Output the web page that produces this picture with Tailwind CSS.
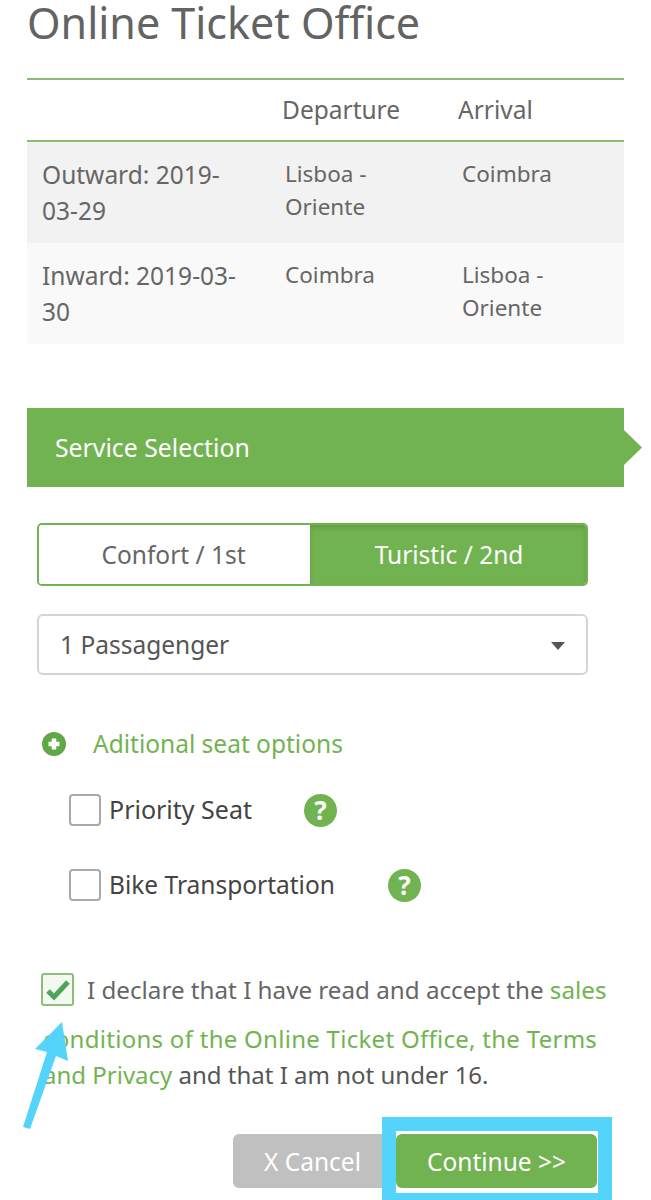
<!DOCTYPE html>
<html lang="en">
<head>
    <meta charset="UTF-8">
    <meta name="viewport" content="width=device-width, initial-scale=1.0">
    <title>Online Ticket Office</title>
    <script src="https://cdn.jsdelivr.net/npm/@tailwindcss/browser@4"></script>
</head>
<body class="bg-white overflow-hidden">
<div class="relative w-[651px] h-[1200px] overflow-hidden px-[27px] font-['Noto_Sans',sans-serif] text-[#666] text-[24.5px]">
    <!-- Title -->
    <h1 class="h-[78px] text-[43px] leading-[46px] text-[#636363] whitespace-nowrap">Online Ticket Office</h1>

    <!-- Journey table -->
    <div class="w-[597px]">
        <div class="grid grid-cols-[255px_176px_1fr] h-[64px] border-y-2 border-[#8fbb79] items-center">
            <div></div>
            <div>Departure</div>
            <div>Arrival</div>
        </div>
        <div class="grid grid-cols-[258px_177px_1fr] h-[101px] bg-[#f2f2f2] text-[22.5px] leading-[33px]">
            <div class="pl-[15px] pt-[15px] text-[24.5px] leading-[36px]">Outward: 2019-<br>03-29</div>
            <div class="pt-[15px]">Lisboa -<br>Oriente</div>
            <div class="pt-[15px]">Coimbra</div>
        </div>
        <div class="grid grid-cols-[258px_177px_1fr] h-[101px] bg-[#f9f9f9] text-[22.5px] leading-[33px]">
            <div class="pl-[15px] pt-[15px] text-[24.5px] leading-[36px]">Inward: 2019-03-<br>30</div>
            <div class="pt-[15px]">Coimbra</div>
            <div class="pt-[15px]">Lisboa -<br>Oriente</div>
        </div>
    </div>

    <!-- Section header -->
    <div class="relative w-[597px] h-[79px] mt-[64px] bg-[#72b351] text-white text-[24.8px] flex items-center pl-[28px]">
        Service Selection
        <div class="absolute left-full top-[22px] w-[18px] h-[35px] bg-[#72b351] [clip-path:polygon(0_0,100%_50%,0_100%)]"></div>
    </div>

    <!-- Class toggle -->
    <div class="flex w-[551px] h-[63px] mt-[36px] ml-[10px] rounded-[5px] border-2 border-[#72b351] overflow-hidden">
        <div class="w-[271px] flex items-center justify-center bg-white pt-[2px] pr-[2px]">Confort / 1st</div>
        <div class="flex-1 flex items-center justify-center bg-[#72b351] text-white pt-[2px] pl-[2px] shadow-[inset_0_3px_5px_rgba(0,0,0,0.125)]">Turistic / 2nd</div>
    </div>

    <!-- Passengers select -->
    <div class="flex items-center justify-between w-[551px] h-[61px] mt-[28px] ml-[10px] pl-[21px] pr-[21px] pt-[2px] rounded-[6px] border-2 border-[#d4d4d4] text-[#555]">
        <span>1 Passagenger</span>
        <span class="w-0 h-0 border-x-[7px] border-x-transparent border-t-[8px] border-t-[#555]"></span>
    </div>

    <!-- Seat options -->
    <div class="flex items-center h-[32px] mt-[53px] ml-[15px] text-[#72b351]">
        <svg class="w-[24px] h-[24px] mr-[27px]" viewBox="0 0 24 24">
            <circle cx="12" cy="12" r="12" fill="#5fa845"/>
            <path d="M12 6.5v11M6.5 12h11" stroke="#fff" stroke-width="4.5"/>
        </svg>
        <span>Aditional seat options</span>
    </div>

    <div class="flex items-center h-[34px] mt-[33px] ml-[42px] text-[#444]">
        <span class="w-[32px] h-[32px] mr-[8px] rounded-[4px] border-2 border-[#a9a9a9] bg-white"></span>
        <span class="text-[25px]">Priority Seat</span>
        <span class="flex items-center justify-center w-[33px] h-[33px] ml-[52px] rounded-full bg-[#72b351] text-white font-bold text-[26px]">?</span>
    </div>
    <div class="flex items-center h-[34px] mt-[41px] ml-[42px] text-[#444]">
        <span class="w-[32px] h-[32px] mr-[8px] rounded-[4px] border-2 border-[#a9a9a9] bg-white"></span>
        <span>Bike Transportation</span>
        <span class="flex items-center justify-center w-[33px] h-[33px] ml-[53px] rounded-full bg-[#72b351] text-white font-bold text-[26px]">?</span>
    </div>

    <!-- Conditions -->
    <div class="relative mt-[71px] ml-[14px] leading-[36px] whitespace-nowrap text-[24.2px]">
        <div class="flex items-center h-[33px]">
            <span class="flex items-center justify-center w-[33px] h-[33px] mr-[13px] rounded-[3px] border-2 border-[#8cc07a] bg-[#f3f8f0]">
                <svg class="w-[26px] h-[22px]" viewBox="0 0 26 22"><path d="M3 12l6 6L23 3" fill="none" stroke="#4fa557" stroke-width="5"/></svg>
            </span>
            <span>I declare that I have read and accept the <span class="text-[#72b351]">sales</span></span>
        </div>
        <p class="mt-[15px] ml-[2px] text-[24px] text-[#72b351]"><span class="tracking-[0.28px]">conditions of the Online Ticket Office, the Terms</span><br>and Privacy <span class="text-[#555]">and that I am not under 16.</span></p>
    </div>

    <!-- Actions -->
    <div class="flex h-[54px] mt-[41px] ml-[206px] gap-[2px] text-white">
        <button class="w-[161px] rounded-[6px] bg-[#c0c0c0] text-left pl-[31px] pt-[2px]">X Cancel</button>
        <button class="w-[201px] rounded-[6px] bg-[#72b351] pt-[2px]">Continue &gt;&gt;</button>
    </div>

    <!-- Annotation overlays -->
    <div class="absolute left-[382px] top-[1117px] w-[230px] h-[90px] border-[14px] border-[#55d4fb]"></div>
    <svg class="absolute left-0 top-[1015px]" width="80" height="120" viewBox="0 0 80 120">
        <path d="M62 7L35 34 47 37 23 112 30 114 56 41 68 46Z" fill="#55d4fb"/>
    </svg>
</div>
</body>
</html>
